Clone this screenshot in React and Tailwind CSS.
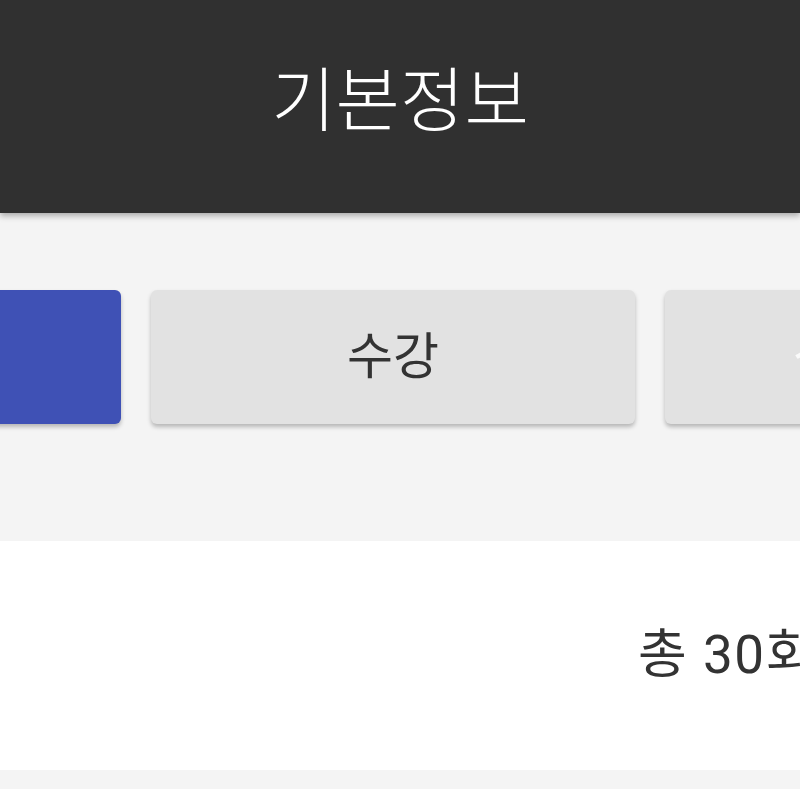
import React from "react";

const font = { fontFamily: 'Roboto, "Noto Sans CJK KR", "Noto Sans", sans-serif' };

export default function App() {
  return (
    <div
      className="w-[800px] h-[800px] overflow-hidden bg-[#f4f4f4]"
      style={font}
    >
      {/* Header */}
      <header className="relative z-10 h-[213px] bg-[#303030] flex items-center justify-center shadow-[0_3px_6px_rgba(0,0,0,0.3)]">
        <h1 className="text-[70px] leading-none text-white font-light -mt-[10px]">
          기본정보
        </h1>
      </header>

      {/* Tabs */}
      <div className="flex gap-[30px] ml-[-363px] mt-[77px]">
        <button className="shrink-0 w-[484px] h-[134px] rounded-[6px] bg-[#3f51b5] text-white text-[50px] shadow-[0_3px_4px_rgba(0,0,0,0.25)]">
          기본정보
        </button>
        <button className="shrink-0 w-[484px] h-[134px] rounded-[6px] bg-[#e2e2e2] text-[#333] text-[50px] shadow-[0_3px_4px_rgba(0,0,0,0.25)]">
          수강
        </button>
        <button className="shrink-0 w-[484px] h-[134px] rounded-[6px] bg-[#e2e2e2] text-[#fafafa] text-[50px] text-left pl-[128px] shadow-[0_3px_4px_rgba(0,0,0,0.25)]">
          상담내역
        </button>
      </div>

      {/* Summary */}
      <div className="mt-[117px] h-[229px] bg-white flex items-center pl-[638px]">
        <span className="text-[53px] leading-none tracking-[1.5px] text-[#333] whitespace-nowrap">
          총 30회
        </span>
      </div>

      <div className="mt-[19px] h-[100px] bg-white" />
    </div>
  );
}
